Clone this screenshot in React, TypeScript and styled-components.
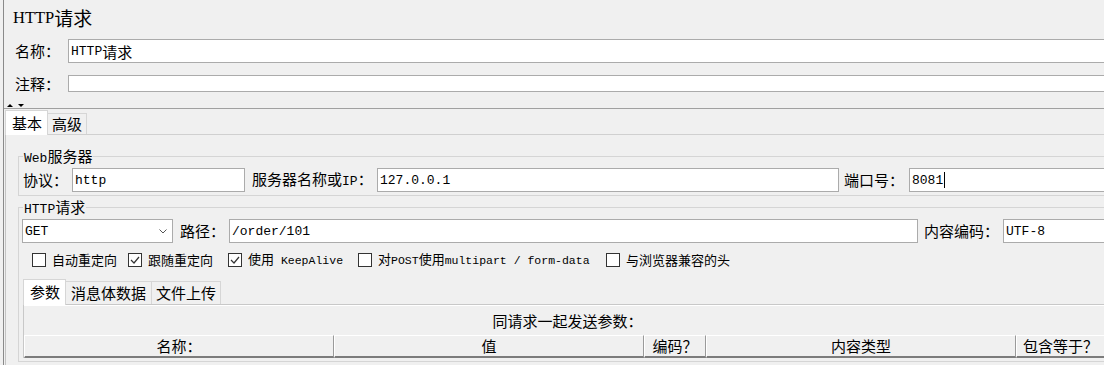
import React from 'react';
import styled, { createGlobalStyle } from 'styled-components';

const CJK = `"Noto Sans CJK SC", "Noto Sans", sans-serif`;
const MONO = `"Liberation Mono", "Noto Sans CJK SC", monospace`;

const Global = createGlobalStyle`
  html, body { margin: 0; padding: 0; background: #f0f0f0; }
  body { font-family: ${CJK}; color: #000; }
  #root { width: 1104px; height: 365px; overflow: hidden; }
`;

const Viewport = styled.div`
  width: 1104px;
  height: 365px;
  overflow: hidden;
  background: #f0f0f0;
`;

const Frame = styled.div`
  margin-left: 3px;
  width: 1160px;
  min-height: 365px;
  border-left: 1px solid #8a8a8a;
  display: flex;
  flex-direction: column;
`;

const Title = styled.div`
  height: 36px;
  display: flex;
  align-items: center;
  padding-left: 9px;
  font-size: 19px;
  line-height: 20px;
`;

const SerifRun = styled.span`
  font-family: "Liberation Serif", serif;
  font-size: 16.5px;
`;

const MonoRun = styled.span<{ $size?: number }>`
  font-family: "Liberation Mono", monospace;
  font-size: ${p => p.$size ?? 13}px;
`;

const CjkRun = styled.span<{ $size?: number }>`
  font-family: ${CJK};
  font-size: ${p => p.$size ?? 15}px;
`;

const FieldRow = styled.div<{ $top: number; $h: number; $pl: number }>`
  display: flex;
  align-items: center;
  margin-top: ${p => p.$top}px;
  height: ${p => p.$h}px;
  padding-left: ${p => p.$pl}px;
`;

const FieldLabel = styled.div<{ $w: number; $ml?: number }>`
  width: ${p => p.$w}px;
  margin-left: ${p => p.$ml ?? 0}px;
  flex: none;
  font-size: 15px;
  line-height: 18px;
  white-space: nowrap;
`;

const TextBox = styled.div<{ $w?: number }>`
  box-sizing: border-box;
  height: 100%;
  background: #fff;
  border: 1px solid #ababab;
  ${p => (p.$w ? `width: ${p.$w}px; flex: none;` : 'flex: 1; min-width: 0;')}
  display: flex;
  align-items: center;
  padding-left: 2px;
  font-family: ${MONO};
  font-size: 13px;
  white-space: nowrap;
  overflow: hidden;
`;

const Caret = styled.span`
  display: inline-block;
  width: 1px;
  height: 16px;
  margin-left: 1px;
  background: #000;
`;

const Splitter = styled.div`
  height: 15px;
  border-bottom: 1px solid #a0a0a0;
  display: flex;
  align-items: flex-end;
  gap: 5px;
  padding: 0 0 1px 3px;
`;

const Arrow = styled.span<{ $up?: boolean }>`
  width: 0;
  height: 0;
  border-left: 3px solid transparent;
  border-right: 3px solid transparent;
  ${p => (p.$up ? 'border-bottom: 3px solid #000;' : 'border-top: 3px solid #000;')}
`;

const TabStrip = styled.div<{ $pl: number; $top?: number }>`
  display: flex;
  align-items: flex-end;
  height: 25px;
  padding-left: ${p => p.$pl}px;
  margin-top: ${p => p.$top ?? 0}px;
`;

const Tab = styled.div<{ $active?: boolean; $h: number; $pad: string }>`
  box-sizing: border-box;
  height: ${p => p.$h}px;
  padding: ${p => p.$pad};
  display: flex;
  align-items: center;
  font-size: 15px;
  line-height: 18px;
  white-space: nowrap;
  border: 1px solid #d6d6d6;
  ${p =>
    p.$active
      ? `background: #fff; border-bottom: none; margin-bottom: -1px; position: relative; z-index: 1; padding-bottom: 1px;`
      : `background: #f0f0f0; border-bottom: none; border-left: none;`}
`;

const MainPanel = styled.div`
  margin-left: 1px;
  border-top: 1px solid #d0d0d0;
  border-left: 1px solid #c4c4c4;
  padding: 13px 0 0 12px;
  flex: 1;
`;

const Group = styled.fieldset<{ $top?: number }>`
  margin: ${p => p.$top ?? 0}px 0 0 0;
  padding: 4px 0 3px 0;
  border: 1px solid #d5d5d5;
  min-width: 0;
`;

const Legend = styled.legend`
  margin-left: 4px;
  padding: 0 1px;
  font-size: 15px;
  line-height: 16px;
  height: 16px;
  white-space: nowrap;
`;

const Select = styled.div`
  width: 151px;
  flex: none;
  box-sizing: border-box;
  height: 100%;
  background: #fff;
  border: 1px solid #ababab;
  display: flex;
  align-items: center;
  justify-content: space-between;
  padding: 0 5px 0 2px;
  font-family: ${MONO};
  font-size: 13px;
`;

const CheckRow = styled.div`
  display: flex;
  align-items: center;
  margin-top: 10px;
  height: 14px;
  padding-left: 13px;
`;

const Check = styled.div<{ $w?: number }>`
  display: flex;
  align-items: center;
  gap: 6px;
  ${p => (p.$w ? `width: ${p.$w}px; flex: none;` : '')}
  font-size: 13px;
  line-height: 14px;
  white-space: nowrap;
`;

const Box = styled.span`
  width: 14px;
  height: 14px;
  box-sizing: border-box;
  border: 1px solid #333;
  background: #fff;
  display: flex;
  align-items: center;
  justify-content: center;
  flex: none;
`;

const SubPanel = styled.div`
  margin-left: 4px;
  border-top: 1px solid #c8c8c8;
  border-left: 1px solid #c8c8c8;
`;

const SubInner = styled.div`
  border-top: 1px solid #fff;
`;

const Caption = styled.div`
  height: 29px;
  display: flex;
  align-items: center;
  justify-content: center;
  font-size: 15px;
  padding-right: 52px;
`;

const HeaderRow = styled.div`
  display: flex;
  height: 23px;
`;

const HeadCell = styled.div<{ $w?: number }>`
  box-sizing: border-box;
  height: 23px;
  ${p => (p.$w ? `width: ${p.$w}px; flex: none;` : 'flex: 1;')}
  border-top: 1px solid #fff;
  border-left: 1px solid #fff;
  border-right: 1px solid #9a9a9a;
  border-bottom: 2px solid #7c7c7c;
  background: #f0f0f0;
  display: flex;
  align-items: center;
  justify-content: center;
  font-size: 15px;
  line-height: 18px;
  white-space: nowrap;
`;

const Tick = () => (
  <svg width="10" height="8" viewBox="0 0 10 8">
    <polyline points="1,4 4,7 9,1" fill="none" stroke="#333" strokeWidth="1.2" />
  </svg>
);

const Chevron = () => (
  <svg width="8" height="5" viewBox="0 0 8 5">
    <polyline points="0.5,0.5 4,4 7.5,0.5" fill="none" stroke="#555" strokeWidth="1" />
  </svg>
);

export default function App() {
  return (
    <Viewport>
      <Global />
      <Frame>
        <Title>
          <SerifRun>HTTP</SerifRun>请求
        </Title>
        <FieldRow $top={3} $h={24} $pl={11}>
          <FieldLabel $w={53}>名称：</FieldLabel>
          <TextBox>
            HTTP<CjkRun>请求</CjkRun>
          </TextBox>
        </FieldRow>
        <FieldRow $top={12} $h={17} $pl={11}>
          <FieldLabel $w={53}>注释：</FieldLabel>
          <TextBox />
        </FieldRow>
        <Splitter>
          <Arrow $up />
          <Arrow />
        </Splitter>

        <TabStrip $pl={1}>
          <Tab $active $h={25} $pad="0 5px 0 6px">基本</Tab>
          <Tab $h={21} $pad="0 4px 0 4px">高级</Tab>
        </TabStrip>
        <MainPanel>
          <Group>
            <Legend>
              <MonoRun>Web</MonoRun>服务器
            </Legend>
            <FieldRow $top={0} $h={24} $pl={4}>
              <FieldLabel $w={49}>协议：</FieldLabel>
              <TextBox $w={173}>http</TextBox>
              <FieldLabel $w={125} $ml={7}>
                服务器名称或<MonoRun>IP</MonoRun>：
              </FieldLabel>
              <TextBox $w={462}>127.0.0.1</TextBox>
              <FieldLabel $w={65} $ml={5}>端口号：</FieldLabel>
              <TextBox>
                8081<Caret />
              </TextBox>
            </FieldRow>
          </Group>

          <Group $top={3}>
            <Legend>
              <MonoRun>HTTP</MonoRun>请求
            </Legend>
            <FieldRow $top={0} $h={24} $pl={3}>
              <Select>
                GET
                <Chevron />
              </Select>
              <FieldLabel $w={49} $ml={7}>路径：</FieldLabel>
              <TextBox $w={689}>/order/101</TextBox>
              <FieldLabel $w={79} $ml={6}>内容编码：</FieldLabel>
              <TextBox>UTF-8</TextBox>
            </FieldRow>

            <CheckRow>
              <Check $w={96}>
                <Box />
                自动重定向
              </Check>
              <Check $w={100}>
                <Box>
                  <Tick />
                </Box>
                跟随重定向
              </Check>
              <Check $w={130}>
                <Box>
                  <Tick />
                </Box>
                <span>
                  使用<MonoRun $size={11.5}> KeepAlive</MonoRun>
                </span>
              </Check>
              <Check $w={248}>
                <Box />
                <span>
                  对<MonoRun $size={11.5}>POST</MonoRun>使用<MonoRun $size={11.5}>multipart / form-data</MonoRun>
                </span>
              </Check>
              <Check>
                <Box />
                与浏览器兼容的头
              </Check>
            </CheckRow>

            <TabStrip $pl={4} $top={12}>
              <Tab $active $h={26} $pad="0 5px 0 6px">参数</Tab>
              <Tab $h={23} $pad="0 5px 0 5px">消息体数据</Tab>
              <Tab $h={23} $pad="0 4px 0 4px">文件上传</Tab>
            </TabStrip>
            <SubPanel>
              <SubInner>
                <Caption>同请求一起发送参数：</Caption>
                <HeaderRow>
                  <HeadCell $w={310}>名称：</HeadCell>
                  <HeadCell $w={310}>值</HeadCell>
                  <HeadCell $w={62}>编码？</HeadCell>
                  <HeadCell $w={310}>内容类型</HeadCell>
                  <HeadCell $w={89}>包含等于？</HeadCell>
                  <HeadCell />
                </HeaderRow>
              </SubInner>
            </SubPanel>
          </Group>
        </MainPanel>
      </Frame>
    </Viewport>
  );
}
